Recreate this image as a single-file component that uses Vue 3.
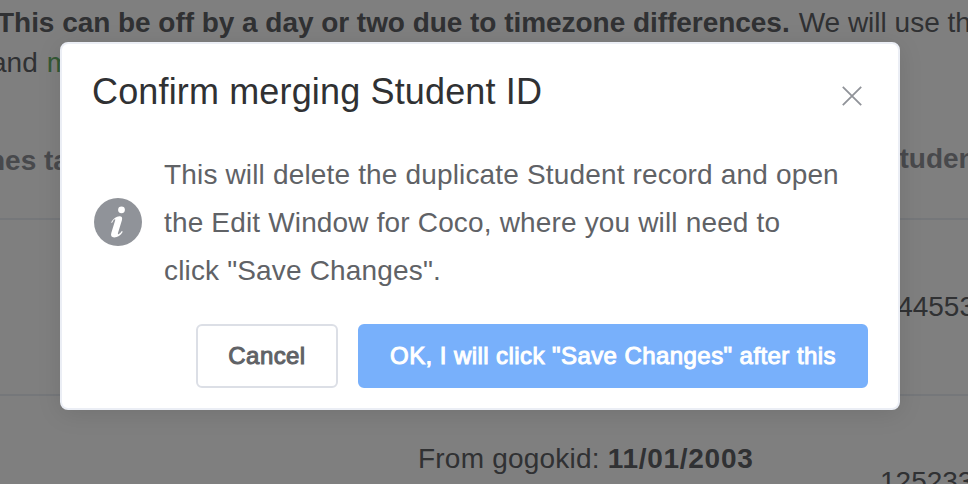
<template>
  <div class="page">
    <div class="notice">
      <p class="line first">
        <strong>This can be off by a day or two due to timezone differences.</strong>
        <span class="rest">We will use the</span>
      </p>
      <p class="line second"><span>and</span> <span class="match">match</span></p>
    </div>

    <!-- duplicates table behind the dialog -->
    <div class="table">
      <div class="row header">
        <span class="col-classes">nes taken</span>
        <span class="col-student">Student</span>
      </div>
      <div class="row record">
        <span class="col-id">44553</span>
      </div>
      <div class="row next">
        <span class="col-date">From gogokid: <strong>11/01/2003</strong></span>
        <span class="col-id-next">125233</span>
      </div>
    </div>

    <div v-if="isVisible" class="overlay">
      <div class="message-box" role="dialog" aria-modal="true">
        <div class="box-header">
          <h2 class="title">Confirm merging Student ID</h2>
          <button class="close" aria-label="Close" @click="close">
            <svg width="20" height="20" viewBox="0 0 20 20">
              <path d="M.8 .8L19.2 19.2M19.2 .8L.8 19.2" />
            </svg>
          </button>
        </div>
        <div class="box-content">
          <svg class="info" width="48" height="48" viewBox="0 0 48 48">
            <circle cx="24" cy="24" r="24" fill="#909399" />
            <circle cx="27.5" cy="11.8" r="3.4" fill="#fff" />
            <path
              d="M17 24.4C19.2 20.6 22.2 18.4 25.4 18.2C27.9 18.1 28.6 19.7 27.9 22.2L24 35C23.7 36.2 24.1 36.6 24.9 36.1C26.1 35.3 27 34.3 27.8 33L28.8 33.7C26.6 37.4 23.6 39.4 20.2 39.4C17.4 39.4 16.5 37.7 17.3 35L21.1 22.6C21.5 21.2 21.2 20.8 20.4 21.4C19.5 22.1 18.9 23.2 18.1 24.8Z"
              fill="#fff"
            />
          </svg>
          <p class="message">
            <span v-for="(text, index) in message" :key="index">{{ text }}</span>
          </p>
        </div>
        <div class="box-buttons">
          <button class="button" @click="close">Cancel</button>
          <button class="button primary" @click="close">OK, I will click "Save Changes" after this</button>
        </div>
      </div>
    </div>
  </div>
</template>

<script setup>
import { ref } from 'vue';

const isVisible = ref(true); // track if the dialog is open

const message = [
  'This will delete the duplicate Student record and open',
  'the Edit Window for Coco, where you will need to',
  'click "Save Changes".',
];

function close() {
  isVisible.value = false;
}
</script>

<style>
body {
  overflow: hidden;
}
</style>

<style scoped>
.page {
  position: relative;
  box-sizing: border-box;
  width: 968px;
  height: 484px;
  padding-top: 3px;
  overflow: hidden;
  background: #fff;
  color: #606266;
  font-family: "Liberation Sans", Arial, sans-serif;
  font-size: 28px;
  line-height: 40px;
  white-space: nowrap;
}

.line {
  display: flex;
  margin: 0;
}

.first {
  gap: 9px;
  margin-left: -3px;
}

.first strong {
  letter-spacing: -0.04px;
}

.second {
  gap: 9px;
  margin-left: -9px;
}

.match {
  color: #67b068;
}

.table {
  margin-top: 35px;
}

.row {
  display: flex;
  box-sizing: border-box;
  border-bottom: 2px solid #ebeef5;
}

.header {
  height: 102px;
  padding-top: 21px;
  justify-content: space-between;
  color: #909399;
  font-weight: bold;
}

.col-classes {
  margin-top: 2px;
  margin-left: -12px;
}

.col-student {
  margin-right: -17px;
}

.record {
  height: 176px;
  padding-top: 67px;
  justify-content: flex-end;
}

.col-id {
  margin-right: -7px;
}

.next {
  height: 120px;
  padding-top: 43px;
  border-bottom: 0;
}

.col-date {
  width: 462px;
  margin-left: 418px;
  flex-shrink: 0;
  letter-spacing: 0.22px;
}

.col-date strong {
  letter-spacing: 0.7px;
}

.col-id-next {
  margin-top: 23px;
}

.overlay {
  position: absolute;
  inset: 0;
  padding: 42px 60px;
  background: rgba(0, 0, 0, 0.5);
}

.message-box {
  box-sizing: border-box;
  width: 840px;
  height: 368px;
  border: 2px solid #ebeef5;
  border-radius: 8px;
  background: #fff;
  box-shadow: 0 4px 24px rgba(0, 0, 0, 0.1);
}

.box-header {
  display: flex;
  justify-content: space-between;
  height: 106px;
  padding: 28px 36px 0 30px;
  box-sizing: border-box;
}

.title {
  margin: 0;
  color: #303133;
  font-size: 36px;
  font-weight: normal;
  line-height: 40px;
  letter-spacing: 0.15px;
}

.close {
  align-self: flex-start;
  display: flex;
  margin-top: 14px;
  padding: 0;
  border: 0;
  background: none;
}

.close path {
  stroke: #909399;
  stroke-width: 1.8;
  fill: none;
}

.box-content {
  display: flex;
  align-items: center;
  gap: 22px;
  height: 144px;
  padding-left: 32px;
}

.message {
  display: flex;
  flex-direction: column;
  margin: 0;
  padding-top: 2px;
  line-height: 48px;
  letter-spacing: 0.16px;
}

.message span {
  align-self: flex-start;
}

.box-buttons {
  display: flex;
  justify-content: flex-end;
  gap: 20px;
  padding: 30px 30px 0;
}

.button {
  box-sizing: border-box;
  width: 142px;
  height: 64px;
  padding: 0;
  border: 2px solid #dcdfe6;
  border-radius: 6px;
  background: #fff;
  color: #606266;
  font-family: inherit;
  font-size: 24px;
  font-weight: normal;
  line-height: 24px;
  letter-spacing: 0.43px;
  /* medium weight, between regular and bold */
  -webkit-text-stroke: 1px currentColor;
}

.primary {
  width: 510px;
  border-color: #78b0fb;
  background: #78b0fb;
  color: #fff;
}
</style>
